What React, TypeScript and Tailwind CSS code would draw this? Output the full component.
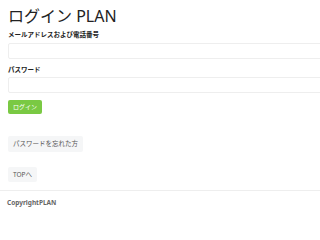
import React from "react";

export default function App() {
  const font = { fontFamily: '"Noto Sans", "Noto Sans CJK JP", sans-serif' };
  return (
    <div className="w-full h-[210px] overflow-hidden bg-white text-[#333]" style={font}>
      <div className="pl-[8px]">
        <h1 className="pt-[6px] text-[16px] leading-[20px] font-normal text-[#222]">ログイン PLAN</h1>
        <div className="mt-[5px] text-[6.5px] leading-[8px] font-bold text-[#222]">メールアドレスおよび電話番号</div>
        <div className="mt-[4px] h-[16px] w-[400px] border border-[#eeeeee] rounded-[2px]" />
        <div className="mt-[7px] text-[6.5px] leading-[8px] font-bold text-[#222]">パスワード</div>
        <div className="mt-[3px] h-[16px] w-[400px] border border-[#eeeeee] rounded-[2px]" />
        <div className="mt-[7px] flex">
          <div className="h-[14px] px-[5px] flex items-center rounded-[2px] bg-[#7ac943] text-white text-[6px]">ログイン</div>
        </div>
        <div className="mt-[22px] flex">
          <div className="h-[16px] px-[5px] flex items-center rounded-[2px] bg-[#f5f6f7] text-[#555] text-[6.5px]">パスワードを忘れた方</div>
        </div>
        <div className="mt-[15px] flex">
          <div className="h-[15px] px-[5px] flex items-center rounded-[2px] bg-[#f5f6f7] text-[#555] text-[6.5px]">TOPへ</div>
        </div>
      </div>
      <div className="mt-[8px] border-t border-[#eeeeee]" />
      <div className="pl-[7px] pt-[8px] text-[6.5px] leading-[8px] font-bold text-[#666]">CopyrightPLAN</div>
    </div>
  );
}
